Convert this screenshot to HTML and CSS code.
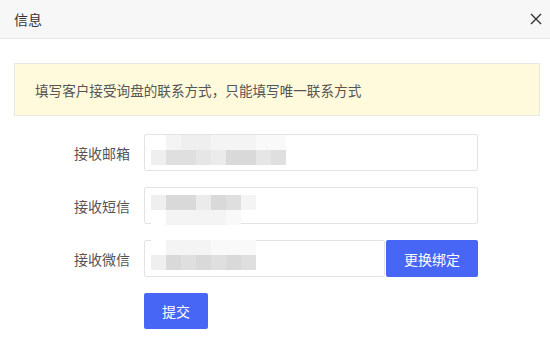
FILE: index.html
```html
<!DOCTYPE html>
<html lang="zh-CN">
<head>
  <meta charset="UTF-8" />
  <meta name="viewport" content="width=device-width, initial-scale=1.0"/>
  <title>信息</title>
  <link rel="stylesheet" href="styles.css">
</head>
<body>
  <div class="dialog">
    <div class="dialog-head">
      <span class="dialog-title">信息</span>
      <span class="dialog-close">
        <svg width="12" height="12" viewBox="0 0 12 12"><path d="M1 1L11 11M11 1L1 11" stroke="#333" stroke-width="1.4"/></svg>
      </span>
    </div>

    <div class="dialog-body">
      <div class="notice">填写客户接受询盘的联系方式，只能填写唯一联系方式</div>

      <form class="contact-form">
        <div class="row">
          <label>接收邮箱</label>
          <div class="field">
            <div class="mosaic">
              <div class="mrow top"><i class="m6"></i><i class="m6"></i><i class="m5"></i><i class="m5"></i><i class="m6"></i><i class="m6"></i><i class="m6"></i><i class="m7"></i><i class="m7"></i></div>
              <div class="mrow"><i class="m5"></i><i class="m2"></i><i class="m2"></i><i class="m3"></i><i class="m4"></i><i class="m1"></i><i class="m1"></i><i class="m3"></i><i class="m2"></i></div>
            </div>
          </div>
        </div>

        <div class="row">
          <label>接收短信</label>
          <div class="field">
            <div class="mosaic">
              <div class="mrow"><i class="m5"></i><i class="m1"></i><i class="m1"></i><i class="m4"></i><i class="m1"></i><i class="m2"></i><i class="m6"></i></div>
              <div class="mrow bottom"><i class="m6"></i><i class="m6"></i><i class="m6"></i><i class="m6"></i><i class="m6"></i><i class="m7"></i></div>
            </div>
          </div>
        </div>

        <div class="row">
          <label>接收微信</label>
          <div class="field short">
            <div class="mosaic">
              <div class="mrow top"><i class="m7"></i><i class="m6"></i><i class="m6"></i><i class="m6"></i><i class="m7"></i><i class="m7"></i><i class="m7"></i></div>
              <div class="mrow"><i class="m5"></i><i class="m1"></i><i class="m2"></i><i class="m1"></i><i class="m2"></i><i class="m1"></i><i class="m2"></i></div>
            </div>
          </div>
          <button type="button" class="btn btn-bind">更换绑定</button>
        </div>

        <div class="row actions">
          <button type="submit" class="btn btn-submit">提交</button>
        </div>
      </form>
    </div>
  </div>
</body>
</html>
```

FILE: styles.css
```css
body { margin: 0; font-family: "Noto Sans CJK SC", "Liberation Sans", sans-serif; background: #fff; color: #333; }
.dialog { width: 550px; height: 343px; background: #fff; }
.dialog-head { height: 38px; background: #f7f7f7; border-bottom: 1px solid #e9e9e9; display: flex; align-items: center; justify-content: space-between; padding: 0 8px 0 14px; }
.dialog-title { font-size: 14px; color: #333; }
.dialog-close { display: flex; width: 12px; height: 12px; }
.dialog-body { padding: 24px 10px 0 14px; }
.notice { height: 51px; background: #fffadb; border: 1px solid #e8e8e2; display: flex; align-items: center; padding-left: 20px; font-size: 13.6px; color: #555; }
.contact-form { margin-top: 18px; display: flex; flex-direction: column; gap: 16px; }
.row { display: flex; align-items: center; height: 37px; }
.row label { width: 116px; margin-right: 14px; text-align: right; font-size: 14px; color: #555; }
.field { width: 332px; height: 35px; border: 1px solid #e3e3e3; border-radius: 2px; position: relative; }
.field.short { width: 239px; }
.mosaic { position: absolute; left: 6px; top: 1px; display: flex; flex-direction: column; }
.mrow { display: flex; height: 15px; }
.mrow i { width: 15px; height: 15px; }
.mrow.top i:first-child, .mrow.bottom i:first-child { background: #fff; }
.m1 { background: #d9d9d9; }
.m2 { background: #dfdfdf; }
.m3 { background: #e6e6e6; }
.m4 { background: #ebebeb; }
.m5 { background: #efefef; }
.m6 { background: #f4f4f4; }
.m7 { background: #f9f9f9; }
.field .mosaic { top: 0; }
.row:nth-child(1) .mosaic { top: 0; }
.row:nth-child(2) .mosaic { top: 7px; }
.row:nth-child(3) .mosaic { top: -1px; }
.btn { border: none; border-radius: 2px; background: #4866f5; color: #fff; font-family: inherit; font-size: 14px; cursor: pointer; }
.btn-bind { width: 92px; height: 37px; margin-left: 1px; }
.actions { padding-left: 130px; height: 36px; }
.btn-submit { width: 64px; height: 36px; }
```
